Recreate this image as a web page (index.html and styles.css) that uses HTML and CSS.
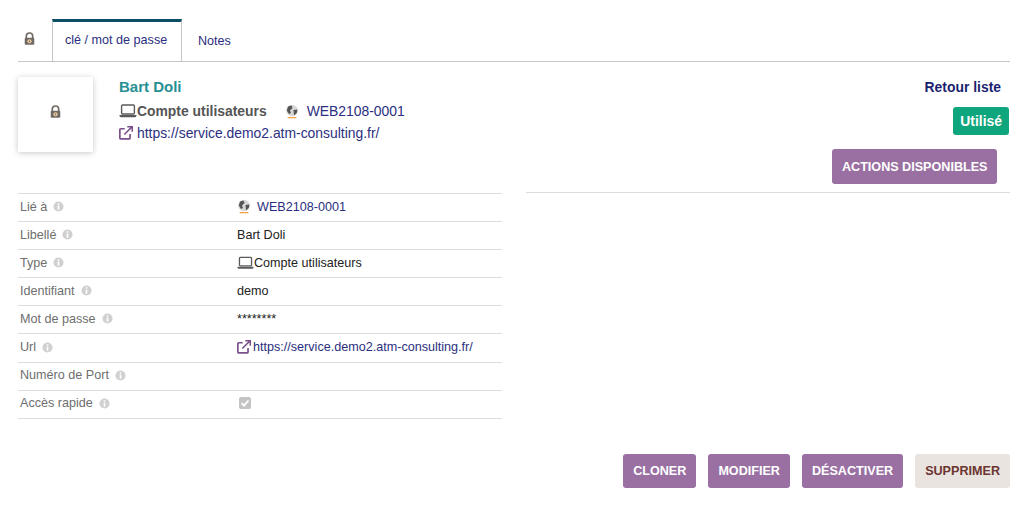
FILE: index.html
```html
<!DOCTYPE html>
<html lang="fr">
<head>
<meta charset="utf-8">
<title>clé / mot de passe</title>
<link rel="stylesheet" href="styles.css">
</head>
<body>
<svg width="0" height="0" class="defs">
  <defs>
    <symbol id="lock" viewBox="0 0 12 14">
      <path d="M2.500 6V4a3.500 3.500 0 0 1 7 0v2" fill="none" stroke="#6f6a66" stroke-width="1.800"/>
      <rect x="0.800" y="5.600" width="10.400" height="7.800" rx="1.200" fill="#6f6a66"/>
      <circle cx="6" cy="9.500" r="2.300" fill="#e9c9a0"/>
      <rect x="5.400" y="8.600" width="1.200" height="2" fill="#8a7a68"/>
    </symbol>
    <symbol id="laptop" viewBox="0 0 18 14">
      <rect x="2.600" y="1" width="12.800" height="9" rx="1" fill="none" stroke="#5a5a5a" stroke-width="1.400"/>
      <path d="M0.500 11h17v0.800a1.400 1.400 0 0 1-1.400 1.400H1.900a1.400 1.400 0 0 1-1.400-1.400z" fill="#5a5a5a"/>
    </symbol>
    <symbol id="ext" viewBox="0.600 0.400 13.200 13.200">
      <path d="M11 8v3.600a1 1 0 0 1-1 1H2.400a1 1 0 0 1-1-1V4a1 1 0 0 1 1-1H6" fill="none" stroke="#7b4f8c" stroke-width="1.600"/>
      <path d="M5.600 8.400 12.200 1.800M8.400 1h4.800v4.800" fill="none" stroke="#7b4f8c" stroke-width="1.600"/>
    </symbol>
    <symbol id="globe" viewBox="0 0 14 15">
      <circle cx="7" cy="6.500" r="5.800" fill="#d8d8d6"/>
      <path d="M3 2.500 6.500 1.500 7.500 4 5 6.500 6 9 4 10 1.800 6.500zM8.500 6 12.500 5.500 11.800 9 9 11.500z" fill="#555"/>
      <rect x="2.500" y="13" width="9" height="1.300" rx="0.600" fill="#f0a040"/>
    </symbol>
    <symbol id="info" viewBox="0 0 12 12">
      <circle cx="6" cy="6" r="5.500" fill="#d0d0d0"/>
      <rect x="5.100" y="2.400" width="1.800" height="1.600" fill="#fff"/>
      <rect x="5.100" y="5" width="1.800" height="4.500" fill="#fff"/>
    </symbol>
  </defs>
</svg>
<div class="page">
  <nav class="tabs">
    <span class="tab tab-icon"><svg class="ic-lock"><use href="#lock"/></svg></span>
    <a class="tab tab-active">clé / mot de passe</a>
    <a class="tab">Notes</a>
  </nav>

  <header class="banner">
    <div class="photo"><svg class="ic-lock"><use href="#lock"/></svg></div>
    <div class="ident">
      <div class="name">Bart Doli</div>
      <div class="ident-line">
        <svg class="ic-laptop"><use href="#laptop"/></svg><b class="type">Compte utilisateurs</b>
        <svg class="ic-globe ident-globe"><use href="#globe"/></svg><a class="link ref">WEB2108-0001</a>
      </div>
      <div class="ident-line">
        <svg class="ic-ext"><use href="#ext"/></svg><a class="link">https://service.demo2.atm-consulting.fr/</a>
      </div>
    </div>
    <div class="status">
      <a class="back">Retour liste</a>
      <span class="badge">Utilisé</span>
      <button class="btn btn-actions">ACTIONS DISPONIBLES</button>
    </div>
  </header>

  <div class="columns">
    <div class="fields">
      <div class="row"><span class="label">Lié à<svg class="ic-info"><use href="#info"/></svg></span><span class="value"><svg class="ic-globe"><use href="#globe"/></svg><a class="link ref-sm">WEB2108-0001</a></span></div>
      <div class="row"><span class="label">Libellé<svg class="ic-info"><use href="#info"/></svg></span><span class="value">Bart Doli</span></div>
      <div class="row"><span class="label">Type<svg class="ic-info"><use href="#info"/></svg></span><span class="value"><svg class="ic-laptop"><use href="#laptop"/></svg>Compte utilisateurs</span></div>
      <div class="row"><span class="label">Identifiant<svg class="ic-info"><use href="#info"/></svg></span><span class="value">demo</span></div>
      <div class="row"><span class="label">Mot de passe<svg class="ic-info"><use href="#info"/></svg></span><span class="value">********</span></div>
      <div class="row"><span class="label">Url<svg class="ic-info"><use href="#info"/></svg></span><span class="value"><svg class="ic-ext"><use href="#ext"/></svg><a class="link">https://service.demo2.atm-consulting.fr/</a></span></div>
      <div class="row"><span class="label">Numéro de Port<svg class="ic-info"><use href="#info"/></svg></span><span class="value"></span></div>
      <div class="row"><span class="label">Accès rapide<svg class="ic-info"><use href="#info"/></svg></span><span class="value"><span class="check"><svg viewBox="0 0 12 12"><path d="M2.500 6.200 5 8.700 9.500 3.500" fill="none" stroke="#fff" stroke-width="1.800"/></svg></span></span></div>
    </div>
    <div class="side"></div>
  </div>

  <footer class="actions">
    <button class="btn">CLONER</button>
    <button class="btn">MODIFIER</button>
    <button class="btn">DÉSACTIVER</button>
    <button class="btn btn-delete">SUPPRIMER</button>
  </footer>
</div>
</body>
</html>
```

FILE: styles.css
```css
* { box-sizing: border-box; }
html, body { margin: 0; height: 511px; overflow: hidden; background: #fff; }
body { font-family: "Liberation Sans", Arial, sans-serif; font-size: 12.6px; color: #222; }
.defs { position: absolute; }
svg { display: inline-block; flex: none; }
.page { padding: 19px 14px 0 18px; }

.tabs { display: flex; height: 43px; border-bottom: 1px solid #c6c6c6; }
.tab { display: flex; align-items: center; padding: 1px 15px 0 16px; color: #2b2f80; height: 42px; }
.tab-icon { width: 34px; padding: 0 0 3px 6px; }
.tab-active { width: 130px; padding: 0 0 3px 12px; border: 1px solid #c6c6c6; border-top: 3px solid #0a4f66; border-bottom: 0; background: #fff; }
.ic-lock { width: 11px; height: 14px; }

.banner { display: flex; padding-top: 15px; height: 131px; }
.photo { width: 75px; height: 75px; padding-bottom: 5px; display: flex; align-items: center; justify-content: center; background: #fff; box-shadow: 0 1px 6px rgba(0,0,0,.22); }
.ident { margin-left: 26px; flex: 1; }
.name { font-size: 15px; font-weight: 700; color: #268f93; line-height: 20px; }
.ident-line { display: flex; align-items: center; margin-top: 4px; height: 20px; font-size: 13.9px; }
.ident-line + .ident-line { margin-top: 2px; }
.type { color: #555; }
.ident-globe { margin-left: 18px; }
.ref { margin-left: 8px; }
.link { color: #2b2f80; }
.ic-laptop { width: 18px; height: 14px; }
.ic-ext { width: 14px; height: 14px; margin-right: 4px; }
.ic-globe { width: 14px; height: 15px; }

.status { display: flex; flex-direction: column; align-items: flex-end; width: 300px; }
.back { margin: 0 9px 0 0; font-size: 13.9px; font-weight: 700; color: #1b1f70; line-height: 20px; }
.badge { margin: 10px 1px 0 0; padding: 0 7px; height: 28px; line-height: 29px; border-radius: 3px; background: #0fa67e; color: #fff; font-size: 13.9px; font-weight: 700; }
.btn { height: 34px; padding: 0 10px; border: 0; border-radius: 3px; background: #9a70a3; color: #fff; font: 700 12.6px "Liberation Sans", Arial, sans-serif; }
.btn-actions { margin: 14px 13px 0 0; height: 35px; padding: 0 9.5px; }
.btn-delete { background: #e9e4e0; color: #6b3530; }

.columns { display: grid; grid-template-columns: 484px 484px; column-gap: 24px; }
.fields { border-top: 1px solid #dcdcdc; }
.side { border-top: 1px solid #dcdcdc; margin-top: -1px; }
.row { display: grid; grid-template-columns: 217px 1fr; align-items: center; height: 28.100px; padding: 0 0 2px 2px; border-bottom: 1px solid #dcdcdc; }
.label { display: flex; align-items: center; color: #6e6e6e; }
.ic-info { width: 11px; height: 11px; margin-left: 6px; }
.value { display: flex; align-items: center; color: #222; }
.value .ic-laptop { width: 17px; }
.value .ic-ext { margin-right: 2px; }
.ref-sm { margin-left: 6px; }
.check { width: 12px; height: 12px; border-radius: 2px; background: #c4c4c4; margin-left: 2px; margin-top: -1px; }
.check svg { display: block; width: 12px; height: 12px; }

.actions { display: flex; justify-content: flex-end; gap: 12px; margin-top: 35px; }
```
